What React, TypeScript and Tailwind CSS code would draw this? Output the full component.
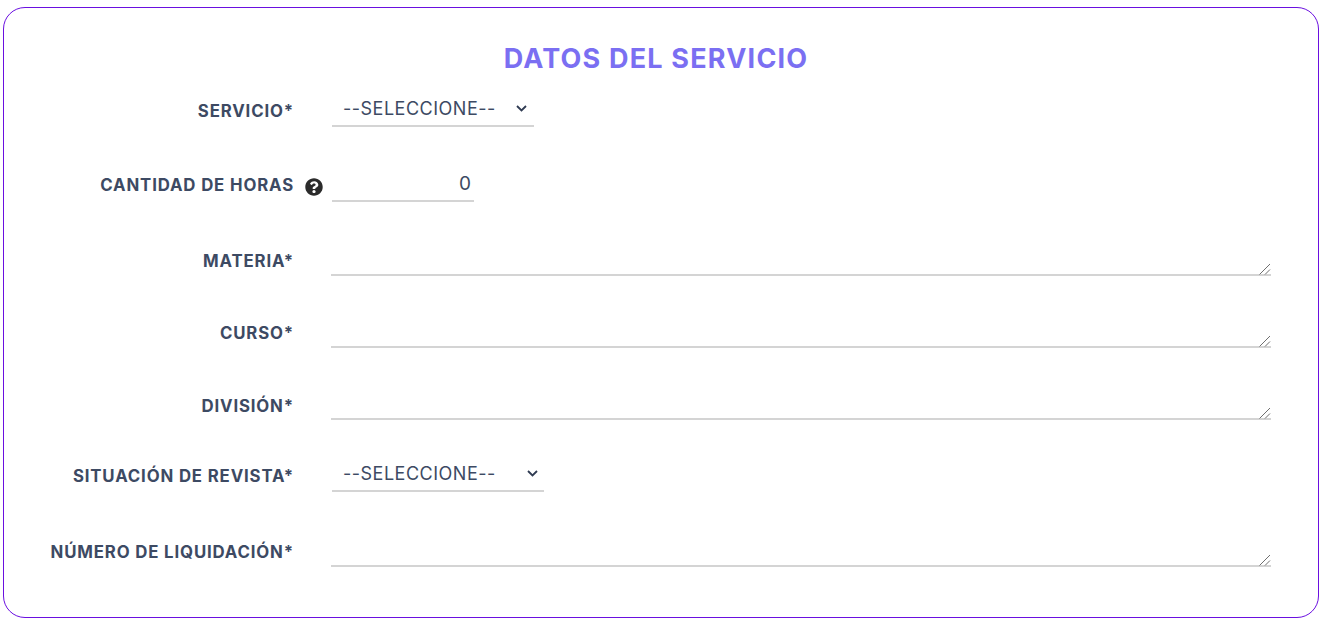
import type { ReactNode } from 'react'
import { FaQuestionCircle } from 'react-icons/fa'

const FONT = 'font-[Inter,"Liberation_Sans",sans-serif]'

function Row({ label, hint, height, pad, children }: { label: string; hint?: boolean; height: string; pad: string; children: ReactNode }) {
  return (
    <div className={`flex items-end ${height}`}>
      <div className={`flex w-[290px] shrink-0 items-center justify-end text-right text-[16.8px] leading-[24px] font-bold tracking-[0.85px] text-[#3d4a63] ${pad}`}>
        {label}
      </div>
      <div className="flex w-[38px] shrink-0 items-center justify-center pb-[6px] pl-[2px]">
        {hint && <FaQuestionCircle className="size-[18px] text-[#2b2b2b]" />}
      </div>
      {children}
    </div>
  )
}

function Select({ width, arrow }: { width: string; arrow: string }) {
  return (
    <div className={`relative ${width}`}>
      <select className="h-[36px] w-full appearance-none border-b-2 border-[#d4d4d4] bg-transparent pl-[11px] text-[18px] tracking-[0.5px] text-[#3d4a63] outline-none">
        <option>--SELECCIONE--</option>
      </select>
      <svg className={`pointer-events-none absolute top-[14px] ${arrow} h-[7px] w-[11px]`} viewBox="0 0 11 7" fill="none" stroke="#2f3b52" strokeWidth="1.8">
        <path d="M1 1 5.5 5.5 10 1" />
      </svg>
    </div>
  )
}

function Area() {
  return (
    <div className="relative -ml-px h-[36px] w-[940px]">
      <textarea className="block h-full w-full resize-none border-b-2 border-[#d4d4d4] bg-transparent outline-none" />
      {/* resize handle */}
      <svg className="absolute right-0 bottom-[1px] size-[13px]" viewBox="0 0 13 13" stroke="#6f6f6f" strokeWidth="1" fill="none">
        <path d="M1.5 12.5 12 2" />
        <path d="M7 12.5 12 7.5" />
      </svg>
    </div>
  )
}

export default function App() {
  return (
    <div className={`h-[625px] w-[1324px] overflow-hidden bg-white pt-[7px] pl-[3px] ${FONT}`}>
      <div className="h-[611px] w-[1316px] rounded-[22px] border border-[#6a0fe0] bg-white">
        <h2 className="pt-[34px] pr-[10px] pb-[16px] text-center text-[27px] leading-[33px] font-bold tracking-[1.2px] text-[#7b6ff2]">
          DATOS DEL SERVICIO
        </h2>
        <Row label="SERVICIO*" height="h-[36px]" pad="pb-[4px]">
          <Select width="w-[202px]" arrow="left-[184px]" />
        </Row>
        <Row label="CANTIDAD DE HORAS" hint height="h-[75px]" pad="pb-[5px]">
          <input
            readOnly
            value="0"
            className="h-[36px] w-[142px] border-b-2 border-[#d4d4d4] bg-transparent pr-[3px] text-right text-[19px] text-[#3d4a63] outline-none"
          />
        </Row>
        <Row label="MATERIA*" height="h-[74px]" pad="pb-[3px]"><Area /></Row>
        <Row label="CURSO*" height="h-[72px]" pad="pb-[3px]"><Area /></Row>
        <Row label="DIVISIÓN*" height="h-[72px]" pad="pb-[2px]"><Area /></Row>
        <Row label="SITUACIÓN DE REVISTA*" height="h-[72px]" pad="pb-[4px]">
          <Select width="w-[212px]" arrow="left-[195px]" />
        </Row>
        <Row label="NÚMERO DE LIQUIDACIÓN*" height="h-[75px]" pad="pb-[3px]"><Area /></Row>
      </div>
    </div>
  )
}
